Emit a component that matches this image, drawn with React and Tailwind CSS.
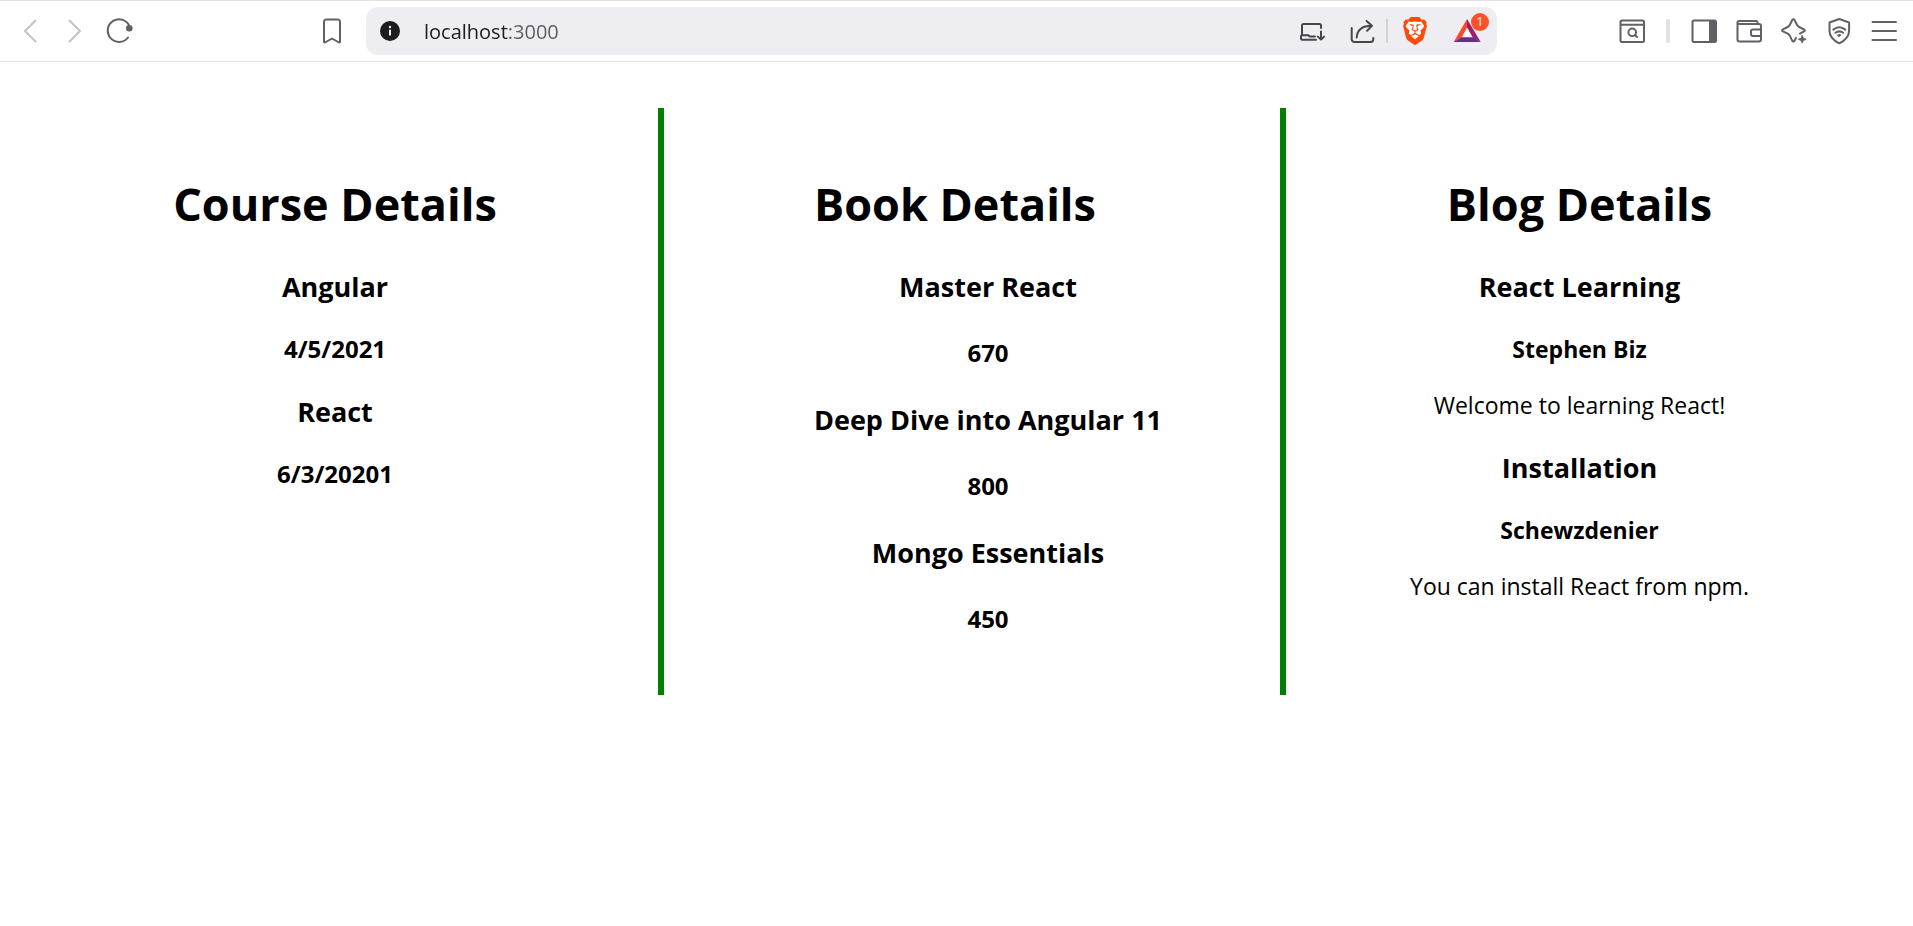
import React from "react";
import { SiBrave } from "react-icons/si";

function Icon({ children, className = "" }) {
  return (
    <svg
      viewBox="0 0 28 28"
      className={"block h-7 w-7 " + className}
      fill="none"
      stroke="currentColor"
      strokeWidth="2"
      strokeLinecap="round"
      strokeLinejoin="round"
      aria-hidden="true"
    >
      {children}
    </svg>
  );
}

function ToolButton({ label, children, className = "" }) {
  return (
    <button type="button" aria-label={label} className={"relative h-7 w-7 shrink-0 " + className}>
      {children}
    </button>
  );
}

function Toolbar() {
  return (
    <header className="flex h-[62px] items-center border-y border-[#e1e1e6] bg-white text-[#5f6167]">
      <nav className="flex w-[366px] shrink-0 items-center gap-[17px] pr-5 pl-4">
        <ToolButton label="Back" className="text-[#c3c4c8]">
          <Icon>
            <path d="M19.5 3.5 9 14l10.500 10.500" />
          </Icon>
        </ToolButton>
        <ToolButton label="Forward" className="text-[#c3c4c8]">
          <Icon>
            <path d="M8.500 3.500 19 14 8.500 24.500" />
          </Icon>
        </ToolButton>
        <ToolButton label="Reload">
          <Icon>
            <path d="M22 20.500A11.300 11.300 0 1 1 23.600 9.600" />
            <circle cx="23.300" cy="11.300" r="3.300" fill="currentColor" stroke="none" />
          </Icon>
        </ToolButton>
        <ToolButton label="Bookmark" className="ml-auto">
          <Icon>
            <path d="M6 4.700a2.200 2.200 0 0 1 2.200-2.200h11.600a2.200 2.200 0 0 1 2.200 2.200v20.300l-1 .5-7-4-7 4-1-.5z" />
          </Icon>
        </ToolButton>
      </nav>

      <div className="flex h-12 min-w-0 flex-1 items-center rounded-xl bg-[#eeedf2] pr-4 pl-[14px] text-[#45464c]">
        <button type="button" aria-label="Site information" className="h-5 w-5 shrink-0">
          <svg viewBox="0 0 20 20" className="block h-5 w-5" aria-hidden="true">
            <circle cx="10" cy="10" r="10" fill="#1b1b20" />
            <circle cx="10" cy="6" r="1.200" fill="#eeedf2" />
            <path d="M10 8.800v5.700" stroke="#eeedf2" strokeWidth="2" />
          </svg>
        </button>
        <input
          type="text"
          aria-label="Address"
          defaultValue="localhost:3000"
          className="ml-6 h-8 min-w-0 flex-1 bg-[linear-gradient(90deg,#1b1b20_85px,#5b5c63_85px)] bg-clip-text text-[20px] text-transparent outline-none"
        />
        <ToolButton label="Install app">
          <Icon>
            <path d="M23 11V8.500A1.500 1.500 0 0 0 21.500 7H5.500A1.500 1.500 0 0 0 4 8.500v9.500M18 22.800H4.300A1.300 1.300 0 0 1 3 21.500v-2.300A1 1 0 0 1 4 18.200h6.500l1 1.300h5.500M23 14.500v8M19.900 19.600l3.100 3 3.100-3" />
          </Icon>
        </ToolButton>
        <ToolButton label="Share" className="ml-[22px]">
          <Icon>
            <path d="M3.700 11v11.200a2.800 2.800 0 0 0 2.800 2.800h16a2.800 2.800 0 0 0 2.800-2.800V21M8.700 20.500C9.200 13.500 14 8.900 23.700 8.800M18.600 4l5.300 4.800-4.800 5" />
          </Icon>
        </ToolButton>
        <div className="ml-2.5 h-6 w-0.5 bg-[#d0d0d6]" />
        <ToolButton label="Brave Shields" className="ml-[13px] grid place-items-center text-[#ff4a0c]">
          <svg viewBox="0 0 28 28" className="col-start-1 row-start-1 block h-7 w-7" aria-hidden="true">
            <path d="M6 5h16v11l-8 8-8-8z" fill="#fff" />
          </svg>
          <SiBrave size={28} className="col-start-1 row-start-1" aria-hidden="true" />
        </ToolButton>
        <ToolButton label="Brave Rewards" className="ml-6">
          <svg viewBox="0 0 28 28" className="block h-7 w-7" aria-hidden="true">
            <path d="M14 10 8.500 20.500h11.500z" fill="#fff" />
            <path d="M14 2v8.500L8.700 20.500.7 25z" fill="#ff4724" />
            <path d="M14 2v8.500l5.800 10 7.900 4.500z" fill="#9e1f63" />
            <path d="M.7 25l8-4.700h11.100l7.900 4.700z" fill="#662d91" />
          </svg>
          <span className="absolute -top-1 -right-2 flex h-[18px] w-[18px] items-center justify-center rounded-full bg-[#ff5029] text-[12px] leading-none text-white">
            1
          </span>
        </ToolButton>
      </div>

      <div className="flex w-[416px] shrink-0 items-center justify-end gap-[17px] pr-[15px]">
        <ToolButton label="Search tabs">
          <Icon>
            <rect x="2.500" y="3.500" width="23.500" height="21.500" rx="1.500" />
            <path d="M3 7.800h23M17.200 18l1.800 2" />
            <circle cx="14.200" cy="15.300" r="3.800" />
          </Icon>
        </ToolButton>
        <div className="mx-[3px] h-6 w-1 rounded-full bg-[#e1e1e6]" />
        <ToolButton label="Side panel">
          <Icon>
            <rect x="2.500" y="3.500" width="23.500" height="21.500" rx="1.500" />
            <path d="M19 3.500h6.500v21.500H19z" fill="currentColor" stroke="none" />
          </Icon>
        </ToolButton>
        <ToolButton label="Wallet">
          <Icon>
            <path d="M22.500 7V5.500A1.500 1.500 0 0 0 21 4H4a1.500 1.500 0 0 0-1.500 1.500V22.500a2 2 0 0 0 2 2H24a2 2 0 0 0 2-2V9a2 2 0 0 0-2-2H4a1.500 1.500 0 0 1-1.500-1.500M26 12.500h-8a2 2 0 0 0-2 2v2.500a2 2 0 0 0 2 2h8" />
          </Icon>
        </ToolButton>
        <ToolButton label="Leo AI">
          <Icon>
            <path d="M20 16.600l3.900-2.200q1.800-1 0-2L19.200 10a5 5 0 0 1-2.200-2.200L14.600 3.100q-1.200-1.900-2.400 0L9.900 7.800A5 5 0 0 1 7.700 10L2.900 12.400q-1.700 1 0 2l4.800 2.300a5 5 0 0 1 2.200 2.200l2.300 4.700q1.200 1.800 2.400 0l1.300-2.600" />
            <path d="M22.200 18.500l1.200 2.600 2.700 1.200-2.700 1.200-1.200 2.700-1.200-2.700-2.700-1.200 2.700-1.200z" fill="currentColor" strokeWidth="0.800" />
          </Icon>
        </ToolButton>
        <ToolButton label="VPN">
          <Icon>
            <path d="M14.300 2 4.500 5.500v8.200c0 5.800 4.200 9.900 9.800 12.600 5.600-2.700 9.800-6.800 9.800-12.600V5.500z" />
            <path d="M8.300 12.600q6-4.700 12 0M10.500 15.800q3.800-2.900 7.600 0" />
            <path d="M12.500 18q1.800-1.300 3.600 0l-1.800 1.600z" fill="currentColor" strokeWidth="0.800" />
          </Icon>
        </ToolButton>
        <ToolButton label="Menu">
          <Icon>
            <path d="M2.500 5h23.500M2.500 14h23.500M2.500 23h23.500" />
          </Icon>
        </ToolButton>
      </div>
    </header>
  );
}

const courses = [
  { name: "Angular", date: "4/5/2021" },
  { name: "React", date: "6/3/20201" },
];

const books = [
  { name: "Master React", price: 670 },
  { name: "Deep Dive into Angular 11", price: 800 },
  { name: "Mongo Essentials", price: 450 },
];

const blogs = [
  { title: "React Learning", author: "Stephen Biz", text: "Welcome to learning React!" },
  { title: "Installation", author: "Schewzdenier", text: "You can install React from npm." },
];

function Title({ children }) {
  return <h1 className="text-[45px] leading-[64px] font-bold">{children}</h1>;
}

function Name({ children }) {
  return <h2 className="text-[27px] leading-[37px] font-bold">{children}</h2>;
}

function Figure({ children }) {
  return <h3 className="text-[24px] leading-8 font-bold">{children}</h3>;
}

function Author({ children }) {
  return <h3 className="mt-7 text-[23px] leading-8 font-bold">{children}</h3>;
}

export default function App() {
  return (
    <div className="min-h-screen bg-white font-['Open_Sans','Noto_Sans',sans-serif] text-black">
      <Toolbar />
      <main className="mt-[46px] grid grid-cols-[664fr_622fr_627fr] text-center">
        <section className="border-r-[6px] border-[#008000] pt-16 pb-[60px] pl-3">
          <Title>Course Details</Title>
          <div className="mt-8 flex flex-col gap-7">
            {courses.map((course) => (
              <div key={course.name} className="flex flex-col gap-7">
                <Name>{course.name}</Name>
                <Figure>{course.date}</Figure>
              </div>
            ))}
          </div>
        </section>

        <section className="flex justify-center border-r-[6px] border-[#008000] pt-16 pb-[60px] pl-8">
          <div>
            <div className="text-left">
              <Title>Book Details</Title>
            </div>
            <div className="mt-8 flex flex-col gap-8">
              {books.map((book) => (
                <div key={book.name} className="flex flex-col gap-8">
                  <Name>{book.name}</Name>
                  <Figure>{book.price}</Figure>
                </div>
              ))}
            </div>
          </div>
        </section>

        <section className="pt-16 pr-10 pb-[60px]">
          <Title>Blog Details</Title>
          <div className="mt-8 flex flex-col gap-7">
            {blogs.map((blog) => (
              <article key={blog.title}>
                <Name>{blog.title}</Name>
                <Author>{blog.author}</Author>
                <p className="mt-6 text-[23px] leading-8">{blog.text}</p>
              </article>
            ))}
          </div>
        </section>
      </main>
    </div>
  );
}
